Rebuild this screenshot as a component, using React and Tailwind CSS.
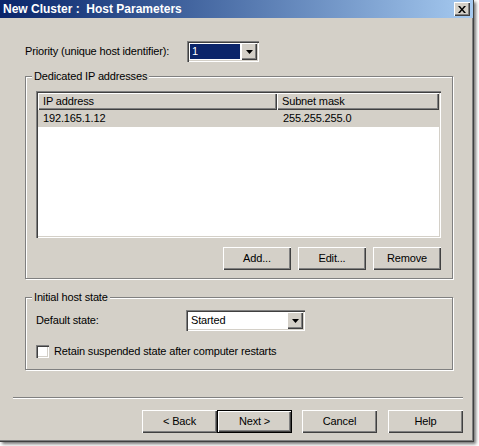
import React from 'react';

// classic 3D borders
const raised = 'shadow-[inset_1px_1px_0_#fff,inset_-1px_-1px_0_#404040,inset_-2px_-2px_0_#808080]';
const sunken = 'shadow-[inset_1px_1px_0_#808080,inset_2px_2px_0_#404040,inset_-1px_-1px_0_#fff,inset_-2px_-2px_0_#d4d0c8]';

const DropArrow = () => (
  <svg width="7" height="4" viewBox="0 0 7 4">
    <path d="M0 0h7L3.5 4z" fill="#000" />
  </svg>
);

const ComboBox = ({ value, width, selected }) => (
  <div className={`flex h-[21px] ${width} bg-white p-[2px] ${sunken}`}>
    <div className="flex-1 p-[1px]">
      <div className={`h-full flex items-center pl-[2px] ${selected ? 'bg-[#0a246a] text-white' : 'text-black'}`}>
        {value}
      </div>
    </div>
    <div className={`w-[16px] h-full flex items-center justify-center bg-[#d4d0c8] ${raised}`}>
      <DropArrow />
    </div>
  </div>
);

const Button = ({ label, width = 'w-[75px]', isDefault, className = '' }) => (
  <div className={`${className} ${width} h-[23px] ${isDefault ? 'border border-black' : ''}`}>
    <div className={`h-full w-full flex items-center justify-center bg-[#d4d0c8] ${raised}`}>
      {label}
    </div>
  </div>
);

const GroupBox = ({ title, className = '', children }) => (
  <div className={`${className} border border-[#808080] shadow-[inset_1px_1px_0_#fff,1px_1px_0_#fff]`}>
    <div className="-mt-[7px] ml-[6px] w-fit px-[2px] bg-[#d4d0c8] leading-[13px]">{title}</div>
    {children}
  </div>
);

export default function App() {
  const rows = [{ ip: '192.165.1.12', mask: '255.255.255.0' }];

  return (
    <div className="w-[479px] h-[446px] bg-white font-['Liberation_Sans',Arial,sans-serif] text-[11px] tracking-[-0.15px] text-black">
      <div className="w-[474px] h-[442px] flex flex-col bg-[#d4d0c8] border-r border-b border-[#404040] shadow-[inset_-1px_-1px_0_#808080,2px_2px_3px_rgba(0,0,0,0.55)]">
        {/* title bar */}
        <div className="h-[18px] flex items-center justify-between bg-linear-to-r from-[#0a246a] to-[#a6caf0] pl-[3px] pr-[3px]">
          <span className="font-bold text-white text-[12px] tracking-normal">New Cluster :&nbsp; Host Parameters</span>
          <div className={`w-[16px] h-[14px] flex items-center justify-center bg-[#d4d0c8] ${raised}`}>
            <svg width="8" height="7" viewBox="0 0 8 7">
              <path d="M0 0h2l2 2.5L6 0h2L5 3.5 8 7H6L4 4.5 2 7H0l3-3.5z" fill="#000" />
            </svg>
          </div>
        </div>

        {/* priority */}
        <div className="flex items-center mt-[23px] pl-[25px]">
          <span className="w-[162px]">Priority (unique host identifier):</span>
          <ComboBox value="1" width="w-[72px]" selected />
        </div>

        {/* dedicated IP group */}
        <GroupBox title="Dedicated IP addresses" className="mt-[14px] ml-[25px] w-[428px] pb-[8px]">
          <div className={`mt-[8px] ml-[10px] w-[405px] h-[147px] bg-white p-[2px] ${sunken}`}>
            <div className="flex h-[17px]">
              <div className={`w-[239px] flex items-center pl-[5px] bg-[#d4d0c8] ${raised}`}>IP address</div>
              <div className={`flex-1 flex items-center pl-[5px] bg-[#d4d0c8] ${raised}`}>Subnet mask</div>
            </div>
            {rows.map((r) => (
              <div key={r.ip} className="flex h-[17px] items-center bg-[#d4d0c8]">
                <span className="w-[239px] pl-[5px]">{r.ip}</span>
                <span className="pl-[6px]">{r.mask}</span>
              </div>
            ))}
          </div>
          <div className="mt-[9px] ml-[10px] w-[405px] flex justify-end gap-[7px]">
            <Button label="Add..." width="w-[68px]" />
            <Button label="Edit..." width="w-[68px]" />
            <Button label="Remove" width="w-[68px]" />
          </div>
        </GroupBox>

        {/* initial state group */}
        <GroupBox title="Initial host state" className="mt-[18px] ml-[25px] w-[428px] pb-[9px]">
          <div className="flex items-center mt-[6px] ml-[10px]">
            <span className="w-[150px]">Default state:</span>
            <ComboBox value="Started" width="w-[119px]" />
          </div>
          <div className="flex items-center mt-[12px] ml-[10px]">
            <div className={`w-[13px] h-[13px] bg-white ${sunken}`} />
            <span className="ml-[5px]">Retain suspended state after computer restarts</span>
          </div>
        </GroupBox>

        {/* separator */}
        <div className="mt-[27px] ml-[13px] w-[450px] h-[2px] border-t border-[#808080] border-b border-b-white" />

        {/* wizard buttons */}
        <div className="flex mt-[11px] ml-[142px]">
          <Button label="< Back" />
          <Button label="Next >" isDefault />
          <Button label="Cancel" className="ml-[10px]" />
          <Button label="Help" className="ml-[11px]" />
        </div>
      </div>
    </div>
  );
}
